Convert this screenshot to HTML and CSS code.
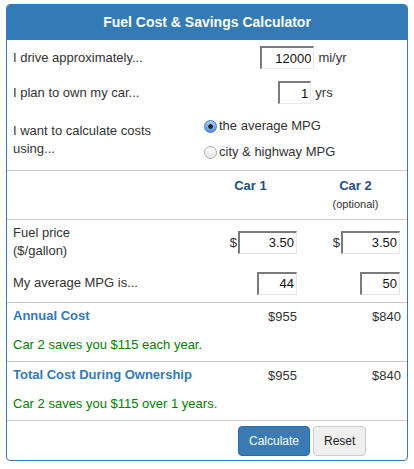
FILE: index.html
```html
<!DOCTYPE html>
<html>
<head>
<meta charset="utf-8">
<title>Fuel Cost &amp; Savings Calculator</title>
<link rel="stylesheet" href="styles.css">
</head>
<body>
<div class="panel">
  <div class="panel-head">Fuel Cost &amp; Savings Calculator</div>

  <div class="row row-drive">
    <div class="label">I drive approximately...</div>
    <div class="span-cell"><input class="box box-miles" type="text" value="12000"><span class="unit">mi/yr</span></div>
  </div>
  <div class="row row-own">
    <div class="label">I plan to own my car...</div>
    <div class="span-cell"><input class="box box-years" type="text" value="1"><span class="unit">yrs</span></div>
  </div>
  <div class="row row-method">
    <div class="label">I want to calculate costs<br>using...</div>
    <div class="radios">
      <label class="radio-line"><input type="radio" name="m" class="radio" checked>the average MPG</label>
      <label class="radio-line"><input type="radio" name="m" class="radio">city &amp; highway MPG</label>
    </div>
  </div>

  <div class="row row-cars sep">
    <div></div>
    <div class="car-head">Car 1</div>
    <div class="car-head">Car 2<div class="optional">(optional)</div></div>
  </div>

  <div class="row row-price sep">
    <div class="label">Fuel price<br>($/gallon)</div>
    <div class="cell c1"><span class="dollar">$</span><input class="box box-price" type="text" value="3.50"></div>
    <div class="cell c2"><span class="dollar">$</span><input class="box box-price" type="text" value="3.50"></div>
  </div>
  <div class="row row-mpg">
    <div class="label">My average MPG is...</div>
    <div class="cell c1"><input class="box box-mpg" type="text" value="44"></div>
    <div class="cell c2"><input class="box box-mpg" type="text" value="50"></div>
  </div>

  <div class="result sep">
    <div class="row row-cost">
      <div class="label title">Annual Cost</div>
      <div class="cell c1 money">$955</div>
      <div class="cell c2 money">$840</div>
    </div>
    <div class="saves">Car 2 saves you $115 each year.</div>
  </div>

  <div class="result sep">
    <div class="row row-cost">
      <div class="label title">Total Cost During Ownership</div>
      <div class="cell c1 money">$955</div>
      <div class="cell c2 money">$840</div>
    </div>
    <div class="saves">Car 2 saves you $115 over 1 years.</div>
  </div>

  <div class="row row-buttons sep">
    <div></div>
    <div class="span-cell buttons">
      <button class="btn btn-primary" type="button">Calculate</button>
      <button class="btn btn-default" type="button">Reset</button>
    </div>
  </div>
</div>
</body>
</html>
```

FILE: styles.css
```css
html, body {
  margin: 0;
  padding: 0;
  background: #ffffff;
}

body {
  font-family: "Liberation Sans", Arial, Helvetica, sans-serif;
  font-size: 13px;
  color: #333333;
}

.panel {
  margin: 4px 0 0 6px;
  width: 402px;
  box-sizing: border-box;
  border: 1px solid #337ab7;
  border-radius: 4px;
  overflow: hidden;
  padding-bottom: 4px;
}

.panel-head {
  height: 35px;
  line-height: 34px;
  background: #337ab7;
  color: #ffffff;
  font-weight: bold;
  font-size: 14px;
  text-align: center;
}

.row {
  display: grid;
  grid-template-columns: 190px 107px 103px;
  align-items: center;
}

.sep {
  border-top: 1px solid #cccccc;
}

.label {
  padding-left: 6px;
  line-height: 18px;
}

.span-cell {
  grid-column: 2 / 4;
  display: flex;
  justify-content: center;
  align-items: center;
}

.row-drive { height: 35px; }
.row-own { height: 35px; }
.row-method { height: 60px; }

.unit {
  margin-left: 4px;
}

.box {
  box-sizing: border-box;
  height: 23px;
  margin: 0;
  padding: 0 2px 0 0;
  font-family: "Liberation Sans", Arial, Helvetica, sans-serif;
  font-size: 13px;
  color: #111111;
  text-align: right;
  background: #ffffff;
  border-top: 2px solid #7b7b7b;
  border-left: 2px solid #7b7b7b;
  border-right: 1px solid #e8e8e8;
  border-bottom: 1px solid #e8e8e8;
  outline: none;
}

.box-miles { width: 54px; margin-left: 3px; }
.box-years { width: 33px; margin-left: 7px; }
.box-price { width: 59px; }
.box-mpg { width: 40px; }

.radios {
  grid-column: 2 / 4;
  padding-left: 7px;
  display: flex;
  flex-direction: column;
  margin-top: -2px;
}

.radio-line {
  display: flex;
  align-items: center;
  height: 26px;
  line-height: 18px;
}

.radio {
  appearance: none;
  -webkit-appearance: none;
  box-sizing: border-box;
  width: 13px;
  height: 13px;
  margin: 0 2px 0 0;
  border-radius: 50%;
  border: 1px solid #a9a9a9;
  background: linear-gradient(#ffffff, #e4e4e4);
  position: relative;
}

.radio:checked {
  border-color: #4a78b8;
  background: radial-gradient(circle at 50% 50%, #1b2430 0, #1b2430 2px, transparent 2.5px),
              linear-gradient(#a9cdf2, #4f8fd9);
}

.row-cars {
  height: 48px;
  align-items: start;
}

.car-head {
  padding-top: 7px;
  text-align: center;
  font-weight: bold;
  color: #23507d;
  line-height: 16px;
}

.optional {
  margin-top: 2px;
  font-weight: normal;
  font-size: 11px;
  color: #333333;
  line-height: 16px;
}

.cell {
  display: flex;
  justify-content: flex-end;
  align-items: center;
  padding-right: 7px;
}

.dollar {
  margin-right: 1px;
  font-size: 13px;
}

.row-price { height: 44px; }
.row-mpg { height: 38px; }

.row-cost {
  height: 26px;
}

.title {
  font-weight: bold;
  color: #337ab7;
}

.money {
  color: #333333;
}

.c2.money {
  padding-right: 6px;
}

.saves {
  height: 32px;
  line-height: 32px;
  padding-left: 6px;
  color: #008000;
}

.row-buttons {
  padding-top: 5px;
}

.buttons {
  gap: 3px;
}

.btn {
  box-sizing: border-box;
  height: 30px;
  padding: 0 10px;
  font-family: "Liberation Sans", Arial, Helvetica, sans-serif;
  font-size: 12px;
  border-radius: 4px;
  border: 1px solid;
  cursor: pointer;
}

.btn-primary {
  width: 72px;
  background: #3a7bb6;
  border-color: #2e6da4;
  color: #ffffff;
}

.btn-default {
  width: 53px;
  background: #efefef;
  border-color: #cccccc;
  color: #222222;
}
```
